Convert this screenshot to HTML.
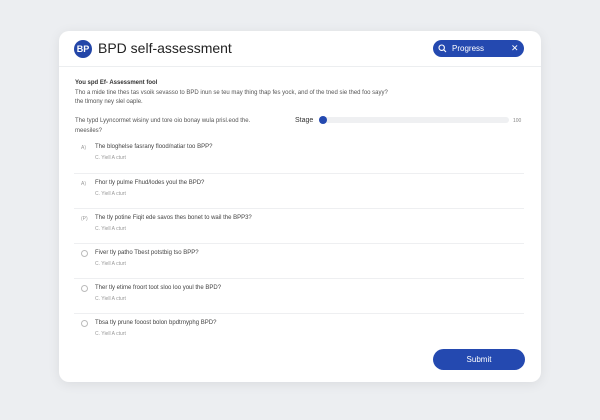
<!DOCTYPE html>
<html><head><style>
body{margin:0;width:600px;height:420px;background:#eceef1;font-family:"Liberation Sans",sans-serif;position:relative;overflow:hidden}
.card{position:absolute;left:59px;top:31px;width:482px;height:351px;background:#fff;border-radius:10px;box-shadow:0 2px 12px rgba(0,0,0,.08)}
.hdr{position:absolute;left:0;top:0;width:482px;height:35px;border-bottom:1px solid #eceef0}
.logo{position:absolute;left:15px;top:9px;width:18px;height:18px;border-radius:50%;background:#2346a8;color:#fff;font-size:9px;font-weight:bold;line-height:18px;text-align:center}
.title{position:absolute;left:39px;top:9px;font-size:14px;color:#222}
.srch{position:absolute;left:374px;top:9px;width:91px;height:17px;border-radius:9px;background:#2449b0;color:#fff;font-size:8px;line-height:17px}
.t{position:absolute;font-size:6px;color:#444;white-space:nowrap}
.s{position:absolute;font-size:5px;color:#999;white-space:nowrap}
.r{position:absolute;left:22px;width:5px;height:5px;border:1px solid #bbb;border-radius:50%}
.hr{position:absolute;left:15px;width:450px;height:1px;background:#eeeff1}
.btn{position:absolute;left:374px;top:318px;width:92px;height:21px;border-radius:11px;background:#2449b0;color:#fff;font-size:8px;text-align:center;line-height:21px}
</style></head><body>
<div class="card">
<div class="hdr">
<div class="logo">BP</div>
<div class="title">BPD self-assessment</div>
<div class="srch"><svg style="position:absolute;left:5px;top:4px" width="9" height="9" viewBox="0 0 9 9"><circle cx="3.7" cy="3.7" r="2.7" fill="none" stroke="#fff" stroke-width="1.1"/><path d="M5.7 5.7L8 8" stroke="#fff" stroke-width="1.1"/></svg><span style="position:absolute;left:19px">Progress</span><span style="position:absolute;left:78px;font-size:9px">✕</span></div>
</div>
<div class="t" style="left:16px;top:49px;font-weight:bold;color:#333">You spd Ef- Assessment fool</div>
<div class="t" style="left:16px;top:59px;color:#555">Tho a mide tine thes tas vsoik sevasso to BPD inun se teu may thing thap fes yock, and of the tned sie thed foo sayy?</div>
<div class="t" style="left:16px;top:68px;color:#555">the tlmony ney slel oaple.</div>
<div class="t" style="left:16px;top:87px;color:#555">The typd Lyyncormet wisiny und tore oio bonay wula prisl.eod the.</div>
<div class="t" style="left:16px;top:97px;color:#555">meesiles?</div>
<div class="t" style="left:236px;top:86px;font-size:7px;color:#333">Stage</div>
<div style="position:absolute;left:262px;top:86px;width:188px;height:6px;border-radius:3px;background:#eff0f2"></div>
<div style="position:absolute;left:260px;top:85px;width:8px;height:8px;border-radius:50%;background:#2449b0"></div>
<div class="s" style="left:454px;top:87px;color:#888">100</div>

<div class="s" style="left:22px;top:114px">A)</div><div class="t" style="left:36px;top:113px">The bloghelse fasrany flood/natiar too BPP?</div><div class="s" style="left:36px;top:124px">C. Yiell A cturt</div>
<div class="hr" style="top:142px"></div>
<div class="s" style="left:22px;top:150px">A)</div><div class="t" style="left:36px;top:149px">Fhor tly pulme Fhud/lodes youl the BPD?</div><div class="s" style="left:36px;top:160px">C. Yiell A cturt</div>
<div class="hr" style="top:177px"></div>
<div class="s" style="left:22px;top:185px">(P)</div><div class="t" style="left:36px;top:184px">The tly potine Fiqit ede savos thes bonet to wail the BPP3?</div><div class="s" style="left:36px;top:195px">C. Yiell A cturt</div>
<div class="hr" style="top:212px"></div>
<div class="r" style="top:219px"></div><div class="t" style="left:36px;top:219px">Fiver tly patho Tbest potstbig tso BPP?</div><div class="s" style="left:36px;top:230px">C. Yiell A cturt</div>
<div class="hr" style="top:247px"></div>
<div class="r" style="top:254px"></div><div class="t" style="left:36px;top:254px">Ther tly etime froort toot sloo loo youl the BPD?</div><div class="s" style="left:36px;top:265px">C. Yiell A cturt</div>
<div class="hr" style="top:282px"></div>
<div class="r" style="top:289px"></div><div class="t" style="left:36px;top:289px">Tbsa tly prune fooost bolon bpdtrnyphg BPD?</div><div class="s" style="left:36px;top:300px">C. Yiell A cturt</div>
<div class="btn">Submit</div>
</div>
</body></html>
